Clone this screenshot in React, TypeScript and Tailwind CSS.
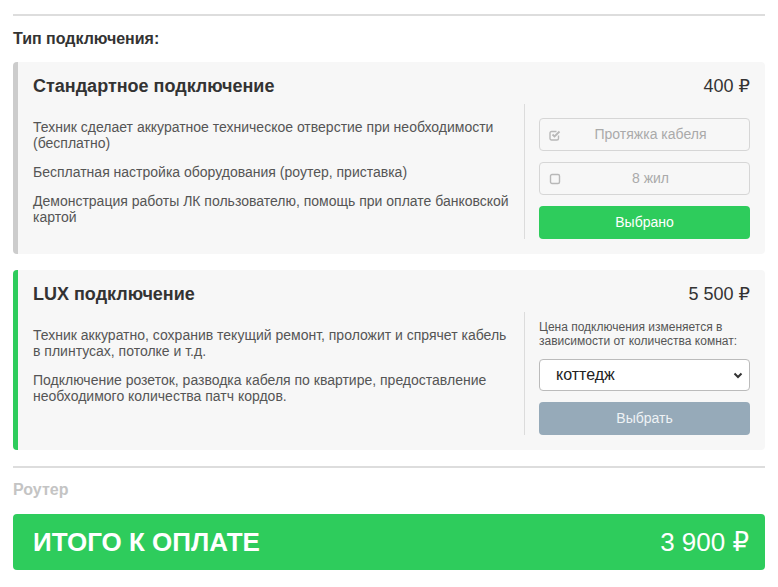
import React from 'react';

const font = { fontFamily: '"Liberation Sans", Arial, "DejaVu Sans", sans-serif' };

const CheckedIcon = () => (
  <svg width="12" height="12" viewBox="0 0 12 12" fill="none" stroke="#b8b8b8" strokeWidth="1.4">
    <path d="M9.5 6.5v3a1.5 1.5 0 0 1-1.5 1.5H2.5A1.5 1.5 0 0 1 1 9.5V4A1.5 1.5 0 0 1 2.5 2.5h5" />
    <path d="M3.5 5.5l2 2 5-5" strokeWidth="1.8" />
  </svg>
);

const EmptyIcon = () => (
  <svg width="12" height="12" viewBox="0 0 12 12" fill="none" stroke="#b8b8b8" strokeWidth="1.4">
    <rect x="1.5" y="1.5" width="9" height="9" rx="1.5" />
  </svg>
);

const Option = ({ icon, label }: { icon: React.ReactNode; label: string }) => (
  <div className="relative flex h-[33px] items-center justify-center rounded-[4px] border border-[#d6d6d6] pl-[12px] text-[14px] text-[#aaa]">
    <span className="absolute left-[9px] top-[10px]">{icon}</span>
    {label}
  </div>
);

const Card = ({
  title,
  price,
  accent,
  items,
  sidePad,
  children,
}: {
  title: string;
  price: string;
  accent: string;
  items: string[];
  sidePad: string;
  children: React.ReactNode;
}) => (
  <div className={`rounded-[4px] border-l-[5px] ${accent} bg-[#f7f7f7] px-[15px] pt-[14px] pb-[15px]`}>
    <div className="flex items-center justify-between leading-[20px]">
      <div className="text-[18px] font-bold text-[#333]">{title}</div>
      <div className="text-[18px] text-[#333]">{price}</div>
    </div>
    <div className="mt-[8px] flex">
      <div className="w-[491px] pt-[15px] pr-[15px]">
        {items.map((t, i) => (
          <p key={i} className={`text-[14px] leading-[16px] text-[#555] ${i > 0 ? 'mt-[13px]' : ''}`}>
            {t}
          </p>
        ))}
      </div>
      <div className={`flex-1 border-l border-[#dcdcdc] pl-[14px] ${sidePad}`}>{children}</div>
    </div>
  </div>
);

export default function App() {
  return (
    <div className="min-h-[587px] bg-white px-[13px] pt-[14px]" style={font}>
      <div className="h-[2px] bg-[#dddddd]" />
      <h3 className="mt-[14px] text-[16px] font-bold leading-[18px] text-[#333]">Тип подключения:</h3>

      <div className="mt-[14px]">
        <Card
          title="Стандартное подключение"
          price="400 ₽"
          accent="border-[#cccccc]"
          sidePad="pt-[14px]"
          items={[
            'Техник сделает аккуратное техническое отверстие при необходимости (бесплатно)',
            'Бесплатная настройка оборудования (роутер, приставка)',
            'Демонстрация работы ЛК пользователю, помощь при оплате банковской картой',
          ]}
        >
          <div className="flex flex-col gap-[11px]">
            <Option icon={<CheckedIcon />} label="Протяжка кабеля" />
            <Option icon={<EmptyIcon />} label="8 жил" />
            <button className="h-[33px] rounded-[4px] bg-[#2ecc5c] text-[14px] text-white">Выбрано</button>
          </div>
        </Card>
      </div>

      <div className="mt-[16px]">
        <Card
          title="LUX подключение"
          price="5 500 ₽"
          accent="border-[#2ecc5c]"
          sidePad="pt-[8px]"
          items={[
            'Техник аккуратно, сохранив текущий ремонт, проложит и спрячет кабель в плинтусах, потолке и т.д.',
            'Подключение розеток, разводка кабеля по квартире, предоставление необходимого количества патч кордов.',
          ]}
        >
          <div className="flex flex-col">
            <p className="text-[12px] leading-[14px] text-[#555]">
              Цена подключения изменяется в зависимости от количества комнат:
            </p>
            <div className="relative mt-[11px] flex h-[32px] items-center rounded-[4px] border border-[#bbb] bg-white pl-[16px] text-[16px] text-[#222]">
              коттедж
              <svg className="absolute right-[6px] top-[12px]" width="10" height="7" viewBox="0 0 10 7">
                <path d="M1.5 1.5L5 5l3.5-3.5" fill="none" stroke="#333" strokeWidth="2" />
              </svg>
            </div>
            <button className="mt-[11px] h-[33px] rounded-[4px] bg-[#96aab9] text-[14px] text-[#eef2f5]">Выбрать</button>
          </div>
        </Card>
      </div>

      <div className="mt-[16px] h-[2px] bg-[#dddddd]" />
      <div className="mt-[13px] text-[16px] font-bold leading-[18px] text-[#c4c4c4]">Роутер</div>

      <div className="mt-[15px] flex h-[56px] items-center justify-between rounded-[4px] bg-[#2ecc5c] pl-[20px] pr-[16px] text-white">
        <div className="text-[26px] font-bold">ИТОГО К ОПЛАТЕ</div>
        <div className="text-[26px]">3 900 ₽</div>
      </div>
    </div>
  );
}
